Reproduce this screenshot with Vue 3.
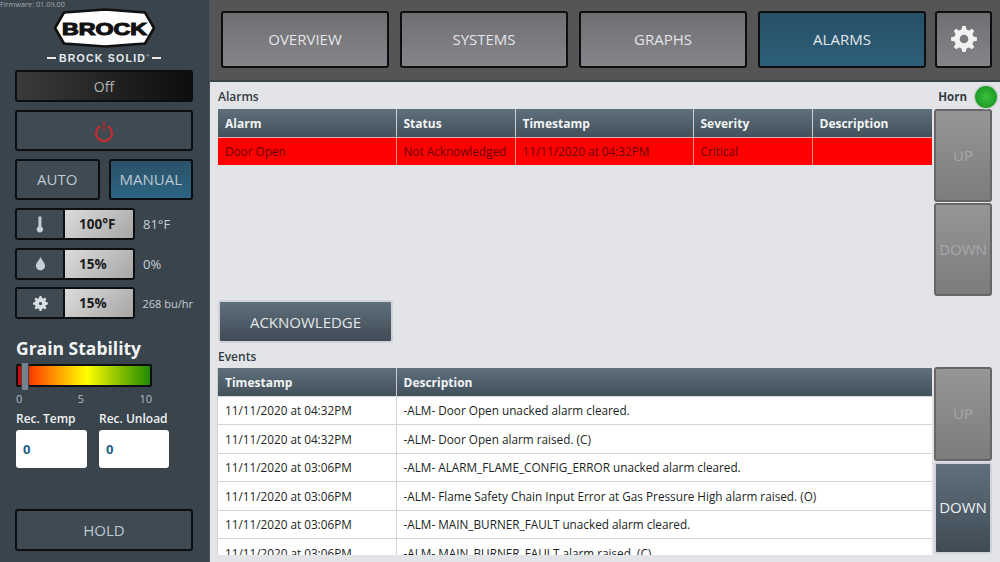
<script setup>
const gearPath = (teeth, outer, inner, hole) => {
  const step = (Math.PI * 2) / teeth
  let d = ""
  for (let i = 0; i < teeth; i++) {
    const a = i * step - Math.PI / 2
    const pts = [
      [inner, a - step * 0.32],
      [outer, a - step * 0.17],
      [outer, a + step * 0.17],
      [inner, a + step * 0.32],
    ]
    pts.forEach(([r, t], j) => {
      const x = (12 + r * Math.cos(t)).toFixed(2)
      const y = (12 + r * Math.sin(t)).toFixed(2)
      d += (i === 0 && j === 0 ? "M" : "L") + x + " " + y + " "
    })
  }
  d += "Z "
  d += `M${12 + hole} 12 A${hole} ${hole} 0 1 0 ${12 - hole} 12 A${hole} ${hole} 0 1 0 ${12 + hole} 12 Z`
  return d
}

const navGear = gearPath(8, 12, 9, 4)
const smallGear = gearPath(8, 12, 9, 2.6)

const navItems = ["OVERVIEW", "SYSTEMS", "GRAPHS", "ALARMS"]

const setpoints = [
  { icon: "temp", value: "100°F", reading: "81°F", small: false },
  { icon: "drop", value: "15%", reading: "0%", small: false },
  { icon: "gear", value: "15%", reading: "268 bu/hr", small: true },
]

const alarmCols = ["Alarm", "Status", "Timestamp", "Severity", "Description"]
const alarmRow = ["Door Open", "Not Acknowledged", "11/11/2020 at 04:32PM", "Critical", ""]

const events = [
  ["11/11/2020 at 04:32PM", "-ALM- Door Open unacked alarm cleared."],
  ["11/11/2020 at 04:32PM", "-ALM- Door Open alarm raised. (C)"],
  ["11/11/2020 at 03:06PM", "-ALM- ALARM_FLAME_CONFIG_ERROR unacked alarm cleared."],
  ["11/11/2020 at 03:06PM", "-ALM- Flame Safety Chain Input Error at Gas Pressure High alarm raised. (O)"],
  ["11/11/2020 at 03:06PM", "-ALM- MAIN_BURNER_FAULT unacked alarm cleared."],
  ["11/11/2020 at 03:06PM", "-ALM- MAIN_BURNER_FAULT alarm raised. (C)"],
]
</script>

<template>
  <div class="screen">
    <aside class="sidebar">
      <div class="firmware">Firmware: 01.09.00</div>
      <div class="logo">
        <svg width="104" height="40" viewBox="0 0 104 40">
          <path d="M12 4.5 L53 1.5 L93 4.5 L102 20 L93 35.5 L53 38.5 L12 35.5 L3 20 Z" fill="#fff" stroke="#111" stroke-width="2.6" stroke-linejoin="round" />
          <text x="52.5" y="26.5" text-anchor="middle" textLength="85" lengthAdjust="spacingAndGlyphs" class="logo-text">BROCK</text>
        </svg>
      </div>
      <div class="tagline"><i></i><span>BROCK SOLID<sup>®</sup></span><i></i></div>

      <div class="btn status">Off</div>
      <div class="btn power">
        <svg width="20" height="22" viewBox="0 0 20 22" fill="none" stroke="#d8262e" stroke-width="2" stroke-linecap="round">
          <path d="M5.5 6.5 A8 8 0 1 0 14.5 6.5" />
          <path d="M10 1.5 V11" stroke="#c5252c" stroke-width="1.4" />
        </svg>
      </div>
      <div class="mode-row">
        <div class="btn mode">AUTO</div>
        <div class="btn mode active">MANUAL</div>
      </div>

      <div v-for="row in setpoints" :key="row.icon" class="setpoint">
        <div class="setpoint-box">
          <div class="setpoint-icon">
            <svg v-if="row.icon === 'temp'" width="8" height="17" viewBox="0 0 8 17" fill="#c4d0d8">
              <path d="M3 0.5 H5.4 V10.5 A3.2 3.2 0 1 1 2.4 10.5 V1 Z" />
            </svg>
            <svg v-else-if="row.icon === 'drop'" width="11" height="15" viewBox="0 0 12 16" fill="#c4d0d8">
              <path d="M6 0.5 C7 4 11 7 11 10.5 A5 5 0 0 1 1 10.5 C1 7 5 4 6 0.5 Z" />
            </svg>
            <svg v-else width="15" height="15" viewBox="0 0 24 24" fill="#d8e0e6" fill-rule="evenodd">
              <path :d="smallGear" />
            </svg>
          </div>
          <div class="setpoint-value">{{ row.value }}</div>
        </div>
        <div class="reading" :class="{ small: row.small }">{{ row.reading }}</div>
      </div>

      <h2 class="stability-title">Grain Stability</h2>
      <div class="stability-bar">
        <span class="thumb"></span>
      </div>
      <div class="scale"><span>0</span><span>5</span><span>10</span></div>

      <div class="rec-row">
        <div class="rec">
          <label>Rec. Temp</label>
          <div class="rec-input">0</div>
        </div>
        <div class="rec">
          <label>Rec. Unload</label>
          <div class="rec-input">0</div>
        </div>
      </div>

      <div class="btn hold">HOLD</div>
    </aside>

    <div class="main">
      <nav class="topbar">
        <div v-for="item in navItems" :key="item" class="nav-btn" :class="{ active: item === 'ALARMS' }">{{ item }}</div>
        <div class="nav-btn gear">
          <svg width="26" height="26" viewBox="0 0 24 24" fill="#f1f1f1" fill-rule="evenodd">
            <path :d="navGear" />
          </svg>
        </div>
      </nav>

      <section class="content">
        <div class="pane alarms-pane">
          <div class="pane-left">
            <div class="pane-title">Alarms</div>
            <table class="grid">
              <colgroup>
                <col style="width: 178px" /><col style="width: 119px" /><col style="width: 178px" /><col style="width: 119px" /><col />
              </colgroup>
              <thead>
                <tr><th v-for="col in alarmCols" :key="col">{{ col }}</th></tr>
              </thead>
              <tbody>
                <tr class="alarm-row"><td v-for="(cell, i) in alarmRow" :key="i">{{ cell }}</td></tr>
              </tbody>
            </table>
          </div>
          <div class="pane-right">
            <div class="horn"><span>Horn</span><i class="led"></i></div>
            <div class="scroll-btn disabled first">UP</div>
            <div class="scroll-btn disabled">DOWN</div>
          </div>
        </div>

        <div class="ack">ACKNOWLEDGE</div>

        <div class="pane events-pane">
          <div class="pane-left">
            <div class="pane-title events-title">Events</div>
            <div class="events-clip">
              <table class="grid events">
                <colgroup><col style="width: 178px" /><col /></colgroup>
                <thead><tr><th>Timestamp</th><th>Description</th></tr></thead>
                <tbody>
                  <tr v-for="(ev, i) in events" :key="i"><td>{{ ev[0] }}</td><td>{{ ev[1] }}</td></tr>
                </tbody>
              </table>
            </div>
          </div>
          <div class="pane-right events-right">
            <div class="scroll-btn disabled first">UP</div>
            <div class="scroll-btn">DOWN</div>
          </div>
        </div>
      </section>
    </div>
  </div>
</template>

<style>
html, body {
  margin: 0;
  background: #e3e4e8;
}
</style>

<style scoped>
.screen {
  display: flex;
  width: 1000px;
  height: 562px;
  overflow: hidden;
  font-family: "Open Sans", "Noto Sans", sans-serif;
}

.sidebar {
  width: 210px;
  height: 562px;
  box-sizing: border-box;
  flex: none;
  background: #3a444c;
  border-right: 1px solid #4a5158;
  padding: 0 16px 0 15px;
  color: #c5d0d9;
}

.firmware {
  height: 9px;
  margin-left: -15px;
  font-size: 7.3px;
  line-height: 9px;
  color: #a3abb1;
}

.logo {
  display: flex;
  justify-content: center;
  height: 38px;
}
.logo svg {
  display: block;
  flex: none;
  margin-top: -1px;
}
.logo-text {
  font-family: "Liberation Sans", sans-serif;
  font-weight: 700;
  font-size: 17px;
  fill: #111;
  stroke: #111;
  stroke-width: 1.1px;
}

.tagline {
  display: flex;
  align-items: center;
  justify-content: center;
  gap: 3px;
  height: 14px;
  margin-top: 4px;
  font-family: "Liberation Sans", sans-serif;
  font-size: 10.5px;
  font-weight: 700;
  letter-spacing: 1.25px;
  color: #e8eaec;
}
.tagline sup {
  font-size: 4px;
  font-weight: 400;
  letter-spacing: 0;
  vertical-align: 5px;
  line-height: 0;
}
.tagline i {
  width: 9px;
  height: 1.5px;
  background: #e8eaec;
}

.btn {
  box-sizing: border-box;
  display: flex;
  align-items: center;
  justify-content: center;
  border: 2px solid #0c0e10;
  border-radius: 3px;
  background: #3f4a53;
  font-size: 15px;
  color: #bcc8d2;
}

.status {
  height: 32px;
  margin-top: 5px;
  background: linear-gradient(90deg, #3a3a3a, #0e0e0e);
  font-size: 14px;
  color: #b5b5b5;
}
.power {
  height: 41px;
  margin-top: 8px;
}
.mode-row {
  display: flex;
  gap: 9px;
  margin-top: 8px;
}
.mode {
  width: 85px;
  height: 41px;
  padding-bottom: 2px;
}
.mode.active {
  background: linear-gradient(180deg, #2a5269, #2c6482);
}

.setpoint {
  display: flex;
  align-items: center;
  height: 32px;
  margin-top: 7.5px;
}
.mode-row + .setpoint {
  margin-top: 8px;
}
.setpoint-box {
  display: flex;
  width: 120px;
  height: 32px;
  box-sizing: border-box;
  border: 2px solid #0c0e10;
  border-radius: 3px;
  overflow: hidden;
}
.setpoint-icon {
  display: flex;
  align-items: center;
  justify-content: center;
  width: 48px;
  box-sizing: border-box;
  border-right: 2px solid #0c0e10;
  background: #3f4a53;
}
.setpoint-value {
  flex: 1;
  display: flex;
  align-items: center;
  padding-left: 14px;
  background: linear-gradient(135deg, #dcdcdc, #a6a6a6);
  font-size: 13.5px;
  font-weight: 700;
  color: #1c1c1c;
}
.reading {
  margin-left: 8px;
  font-size: 13px;
  white-space: nowrap;
  color: #c5d0d9;
}
.reading.small {
  font-size: 11px;
}

.stability-title {
  margin: 18px 0 0 1px;
  font-size: 17.5px;
  line-height: 23px;
  font-weight: 700;
  color: #f2f4f5;
}
.stability-bar {
  position: relative;
  width: 136px;
  height: 23px;
  margin: 4px 0 0 1px;
  box-sizing: border-box;
  border: 2px solid #0c0e10;
  border-radius: 2px;
  background: linear-gradient(90deg, #d40000 0%, #ff4a00 12%, #ffb000 34%, #ffff00 52%, #a0cc00 72%, #1f8a00 100%);
}
.thumb {
  position: absolute;
  left: 3px;
  top: -4px;
  width: 8px;
  height: 29px;
  box-sizing: border-box;
  border-radius: 2px;
  border: 1px solid #3a444c;
  background: #76838c;
}
.scale {
  display: flex;
  justify-content: space-between;
  width: 136px;
  margin: 4px 0 0 1px;
  font-size: 11px;
  line-height: 15px;
  color: #b3bec7;
}

.rec-row {
  display: flex;
  gap: 12px;
  margin: 5px 0 0 1px;
}
.rec {
  width: 71px;
}
.rec + .rec {
  width: 70px;
}
.rec label {
  display: block;
  font-size: 12px;
  line-height: 15px;
  font-weight: 600;
  color: #f0f2f3;
  white-space: nowrap;
}
.rec-input {
  display: flex;
  align-items: center;
  box-sizing: border-box;
  height: 38px;
  margin-top: 4px;
  padding-left: 7px;
  border-radius: 3px;
  background: #fff;
  font-size: 13px;
  font-weight: 700;
  color: #1d5f87;
}

.hold {
  height: 42px;
  margin-top: 41px;
}

.main {
  flex: 1;
  display: flex;
  flex-direction: column;
  min-width: 0;
}

.topbar {
  display: flex;
  gap: 11px;
  box-sizing: border-box;
  height: 82px;
  padding: 11px 8px 0 11px;
  background: #555;
  border-bottom: 2px solid #39434a;
}
.nav-btn {
  box-sizing: border-box;
  display: flex;
  align-items: center;
  justify-content: center;
  width: 168px;
  height: 57px;
  padding-bottom: 2px;
  border: 2px solid #0c0e10;
  border-radius: 3px;
  background: linear-gradient(180deg, #6f6f73, #84848a);
  font-size: 15px;
  color: #e3e5e8;
}
.nav-btn.active {
  background: linear-gradient(180deg, #265066, #2d5f7a);
}
.nav-btn.gear {
  width: 57px;
  margin-left: -2px;
}

.content {
  flex: 1;
  box-sizing: border-box;
  padding: 0 8px;
  background: #e3e4e8;
  min-height: 0;
}

.pane {
  display: flex;
  gap: 2px;
}
.pane-left {
  width: 714px;
  flex: none;
}
.pane-right {
  width: 58px;
  flex: none;
}

.alarms-pane {
  height: 216px;
}
.pane-title {
  height: 27px;
  font-size: 12px;
  line-height: 30px;
  font-weight: 600;
  color: #333c44;
}

.grid {
  width: 714px;
  table-layout: fixed;
  border-collapse: collapse;
  font-size: 11.75px;
}
.grid th {
  height: 28px;
  padding: 1px 7px 0;
  box-sizing: border-box;
  text-align: left;
  font-weight: 700;
  font-size: 12px;
  color: #f2f4f5;
  background: linear-gradient(180deg, #5f707c, #42505a);
  border-right: 1px solid #c9cdd3;
}
.grid td {
  height: 28.5px;
  padding: 0 7px;
  box-sizing: border-box;
  white-space: nowrap;
  overflow: hidden;
  background: #fff;
  color: #1b1f23;
  border-right: 1px solid #d2d3da;
  border-top: 1px solid #d2d3da;
}
.grid th:last-child,
.grid td:last-child {
  border-right: none;
}
.grid .alarm-row td {
  height: 28px;
  padding-bottom: 1px;
  background: #ff0000;
  color: #650508;
  border-top: 1px solid #e9aab0;
  border-right-color: #f08a8e;
}

.pane-right .horn {
  display: flex;
  align-items: center;
  justify-content: flex-end;
  gap: 8px;
  box-sizing: border-box;
  height: 27px;
  padding-top: 2px;
  margin-left: -4px;
  font-size: 11.5px;
  font-weight: 700;
  color: #333c44;
}
.led {
  display: block;
  flex: none;
  width: 22px;
  height: 22px;
  margin-right: -5px;
  border-radius: 50%;
  background: radial-gradient(circle at 50% 50%, #3cc03c, #0f8c1c);
  box-shadow: 0 0 0 1.5px #d0d2d6;
}

.scroll-btn {
  box-sizing: border-box;
  display: flex;
  align-items: center;
  justify-content: center;
  width: 58px;
  height: 93px;
  padding-bottom: 2px;
  border: 2px solid #d0d2da;
  border-radius: 3px;
  background: linear-gradient(180deg, #5f707c, #3f4b55);
  font-size: 15px;
  color: #eef0f2;
}
.scroll-btn.first {
  margin-bottom: 1px;
}
.scroll-btn.disabled {
  border-color: #666;
  background: linear-gradient(180deg, #969699, #7c7c7c);
  color: #a7a7a9;
}

.ack {
  box-sizing: border-box;
  display: flex;
  align-items: center;
  justify-content: center;
  width: 175px;
  height: 43px;
  margin-top: 2px;
  border: 2px solid #d0d2da;
  border-radius: 3px;
  background: linear-gradient(180deg, #5f707c, #3f4b55);
  font-size: 15px;
  color: #e3e6e8;
}

.events-title {
  height: 25px;
  line-height: 27px;
}
.events-clip {
  height: 187px;
  overflow: hidden;
  box-shadow: -1px 0 0 #cfd1d7;
}
.events-right {
  padding-top: 24px;
}
.events-right .scroll-btn.first {
  height: 94px;
}
.events-right .scroll-btn {
  height: 92px;
}
</style>
